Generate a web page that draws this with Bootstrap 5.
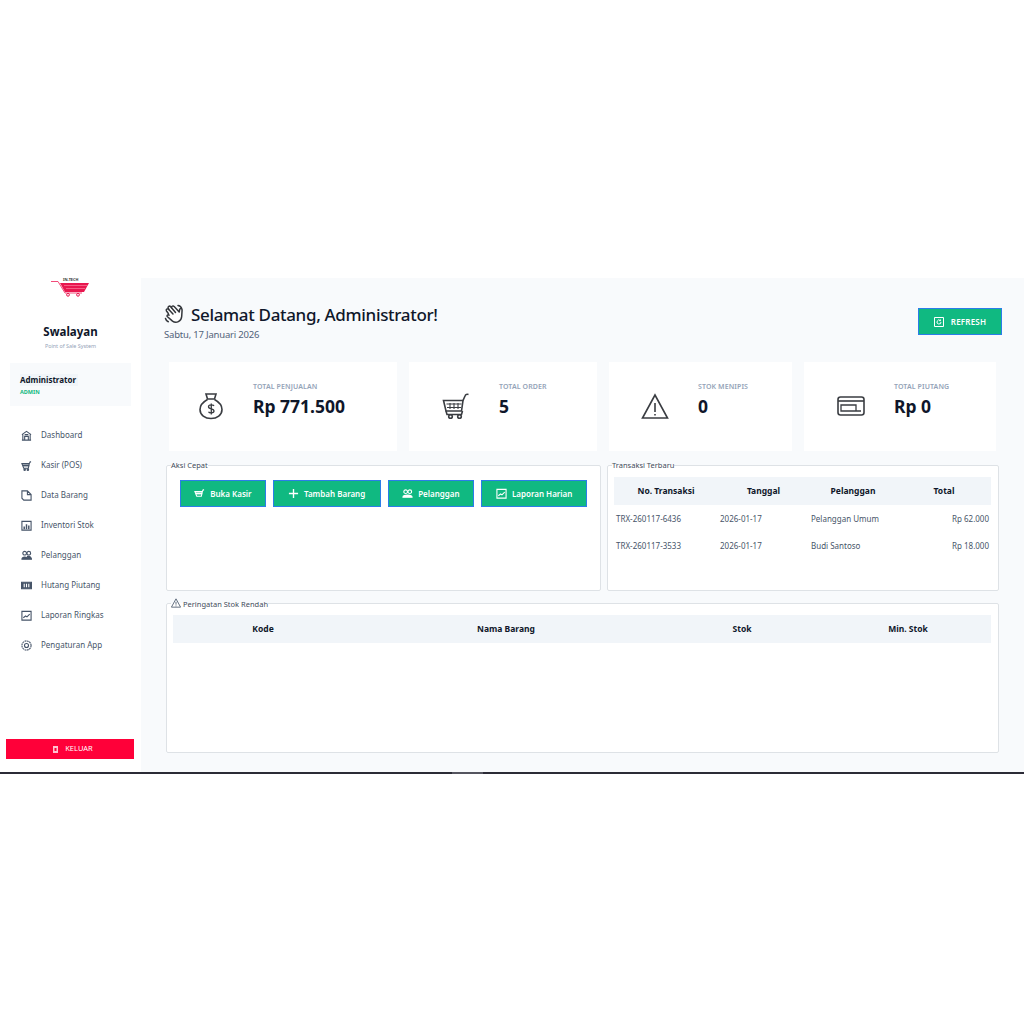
<!DOCTYPE html>
<html lang="en">
<head>
    <meta charset="UTF-8">
    <meta name="viewport" content="width=device-width, initial-scale=1.0">
    <title>Swalayan - Dashboard</title>
    <link href="https://cdn.jsdelivr.net/npm/bootstrap@5.3.0/dist/css/bootstrap.min.css" rel="stylesheet">
    <style>
        body { background: #fff; font-family: "Noto Sans", "Open Sans", sans-serif; color: #0f172a; }
        .app-frame { margin-top: 278px; height: 496px; overflow: hidden; }
        .frame-line { height: 2px; background: #2b2b36; padding-left: 452px; }
        .frame-thumb { display: block; width: 31px; height: 2px; background: #55555f; }
        .side-col { width: 141px; flex: none; background: #fff; height: 494px; }
        .logo-box { height: 43px; }
        .brand-name { font-size: 11.500px; font-weight: 700; line-height: 16px; margin-top: 3px; color: #0f172a; }
        .brand-sub { font-size: 5.400px; line-height: 8px; color: #94a3b8; margin-top: 2px; }
        .user-box { margin: 13px 10px 0; height: 43px; width: 121px; background: #f8fafc; padding: 11px 10px 0; }
        .user-name { font-size: 8px; line-height: 12px; font-weight: 700; color: #0f172a; background: #f1f5f9; width: fit-content; padding-right: 2px; }
        .user-role { font-size: 5.500px; line-height: 8px; font-weight: 700; color: #10b981; margin-top: 2px; }
        .side-menu { margin-top: 14px; padding-left: 21px; }
        .side-link { height: 30px; font-size: 8px; color: #475569; text-decoration: none; gap: 9px; }
        .side-link:hover { color: #475569; }
        .side-link svg { width: 11px; height: 11px; flex: none; stroke: #465468; fill: none; stroke-width: 1.200; }
        .logout-btn { margin: auto 0 13px 6px; width: 128px; height: 20px; background: #ff0039; color: #fff; font-size: 7.500px; border: 0; border-radius: 0; gap: 7px; padding: 0 0 0 6px; }
        .main-col { flex: 1; background: #f8fafc; padding: 25px 22px 0 23px; height: 494px; min-width: 0; }
        .page-title { font-size: 17px; line-height: 24px; font-weight: 500; letter-spacing: -.33px; color: #0f172a; gap: 5px; margin: 0; }
        .page-date { font-size: 9.500px; line-height: 14px; letter-spacing: -.2px; color: #52627a; margin-top: 1px; }
        .green-btn { background: #10b981; color: #fff; border: 1.500px solid #2b7de9; border-radius: 0; font-weight: 600; letter-spacing: .2px; }
        .green-btn:hover { background: #10b981; color: #fff; border-color: #2b7de9; }
        .refresh-btn { width: 84px; height: 27px; font-size: 8px; gap: 7px; margin-top: 5px; }
        .stat-grid { display: grid; grid-template-columns: 228px 188px 183px 192px; gap: 12px; margin: 20px 0 0 5px; }
        .stat-box { background: #fff; height: 89px; display: flex; }
        .stat-ico { flex: none; padding-top: 30px; display: flex; justify-content: center; }
        .stat-ico.nudge { padding-left: 3px; }
        .stat-ico svg { width: 28px; height: 28px; stroke: #3a3d42; fill: none; stroke-width: 1.600; }
        .stat-label { font-size: 7px; line-height: 10px; font-weight: 600; color: #94a3b8; margin-top: 20px; letter-spacing: .1px; }
        .stat-value { font-size: 17.500px; line-height: 24px; font-weight: 700; color: #0f172a; margin-top: 2px; }
        .panel-row { display: flex; gap: 6px; margin: 9px 3px 0 2px; }
        .panel-box { border: 1px solid #dee2e6; border-radius: 2px; background: #fff; margin: 0; padding: 0 7px 0 6px; min-width: 0; }
        .panel-box legend { float: none; width: auto; font-size: 7.500px; line-height: 10px; color: #414b5a; margin: 0 0 0 -2px; padding: 0; }
        .quick-box { width: 435px; height: 131px; padding: 0 13px; }
        .quick-box legend { margin-left: -9px; margin-bottom: 10px; }
        .quick-row { gap: 7px; }
        .trans-box { width: 392px; height: 131px; }
        .quick-btn { height: 27px; font-size: 8px; font-weight: 600; gap: 5px; letter-spacing: 0; }
        .quick-btn svg { width: 11px; height: 11px; stroke: #fff; fill: none; stroke-width: 1.200; flex: none; }
        .data-tbl { width: 100%; font-size: 8px; margin: 0; table-layout: fixed; }
        .data-tbl th { background: #f1f5f9; height: 28px; text-align: center; font-size: 8.500px; font-weight: 700; color: #0f172a; padding: 0; vertical-align: middle; }
        .data-tbl td { height: 27px; padding: 0 2px; color: #475569; vertical-align: middle; }
        .trans-tbl { margin-top: 7px; }
        .col-no { width: 104px; }
        .col-tgl { width: 91px; }
        .col-plg { width: 88px; }
        .col-kode { width: 180px; }
        .col-nama { width: 306px; }
        .col-stok { width: 166px; }
        .stock-box { height: 155px; margin: 7px 3px 0 2px; }
        .stock-tbl { margin-top: 6px; }
        .legend-ico { width: 10px; height: 10px; stroke: #475569; fill: none; stroke-width: 1; vertical-align: -1px; margin-right: 2px; }
    </style>
</head>
<body>
    <div class="app-frame">
        <div class="d-flex">
            <!-- Sidebar -->
            <aside class="side-col d-flex flex-column">
                <div class="logo-box d-flex justify-content-center">
                    <svg width="40" height="20" viewBox="0 0 40 20">
                        <text x="12" y="3" font-size="3.800" font-weight="700" fill="#333" font-family="Noto Sans, sans-serif">IN-TECH</text>
                        <path d="M0 3.500h7l7 11.500h17" fill="none" stroke="#f0386b" stroke-width=".9"/>
                        <path d="M9 5h29l-5 9H14z" fill="#e8174f"/>
                        <path d="M13 7.500h23M15 10.500h19" stroke="#ff8fa8" stroke-width=".6"/>
                        <circle cx="17" cy="16.800" r="1.400" fill="none" stroke="#e8174f"/>
                        <circle cx="27" cy="16.800" r="1.400" fill="none" stroke="#e8174f"/>
                    </svg>
                </div>
                <div class="text-center">
                    <div class="brand-name">Swalayan</div>
                    <div class="brand-sub">Point of Sale System</div>
                </div>
                <div class="user-box">
                    <div class="user-name">Administrator</div>
                    <div class="user-role">ADMIN</div>
                </div>
                <nav class="side-menu">
                    <a href="#" class="side-link d-flex align-items-center"><svg viewBox="0 0 12 12"><path d="M1 5 6 1.500 11 5M2 5v6h8V5M1 11h10M4 11V7h4v4M4 5h4"/></svg>Dashboard</a>
                    <a href="#" class="side-link d-flex align-items-center"><svg viewBox="0 0 12 12"><path d="M1 4h8l-1 5H3zM9 4l1-2h1"/><path d="M2 6h7" stroke-width="2"/><circle cx="4" cy="10.500" r=".8"/><circle cx="7.500" cy="10.500" r=".8"/></svg>Kasir (POS)</a>
                    <a href="#" class="side-link d-flex align-items-center"><svg viewBox="0 0 12 12"><path d="M1 1h6l4 4v6H3L1 9zM7 1v4h4"/></svg>Data Barang</a>
                    <a href="#" class="side-link d-flex align-items-center"><svg viewBox="0 0 12 12"><path d="M1 1.500h10v9.500H1z"/><path d="M3.500 10V7M6 10V4.500M8.500 10V6" stroke-width="1.600"/></svg>Inventori Stok</a>
                    <a href="#" class="side-link d-flex align-items-center"><svg viewBox="0 0 12 12"><circle cx="4" cy="3.500" r="2"/><circle cx="8.500" cy="3.500" r="2"/><path d="M1 10c0-3 6-3 6 0zM7 7c3-.5 4 1 4.500 3H7z" fill="#465468"/></svg>Pelanggan</a>
                    <a href="#" class="side-link d-flex align-items-center"><svg viewBox="0 0 12 12"><path d="M.5 2.500h11v7H.5z" fill="#465468"/><path d="M3.500 4v4M6 4v4M8.500 4v4" stroke="#fff"/></svg>Hutang Piutang</a>
                    <a href="#" class="side-link d-flex align-items-center"><svg viewBox="0 0 12 12"><path d="M1 1.500h10v9.500H1zM2.500 8.500 5 6.500l1.500 1L9.500 4.500"/></svg>Laporan Ringkas</a>
                    <a href="#" class="side-link d-flex align-items-center"><svg viewBox="0 0 12 12"><circle cx="6" cy="6" r="5" stroke-dasharray="2 .6"/><circle cx="6" cy="6" r="2.200"/></svg>Pengaturan App</a>
                </nav>
                <button class="logout-btn d-flex align-items-center justify-content-center">
                    <svg width="5" height="7" viewBox="0 0 5 7"><path d="M0 0h5v7H0z" fill="#ffc2d0"/><path d="M1.500 2h2v3h-2z" fill="#ff0039"/></svg>KELUAR
                </button>
            </aside>

            <!-- Main content -->
            <main class="main-col">
                <div class="d-flex justify-content-between align-items-start">
                    <div>
                        <h1 class="page-title d-flex align-items-center">
                            <svg width="22" height="22" viewBox="0 0 22 22" fill="#fff" stroke="#33363b" stroke-width="1.500" stroke-linejoin="round" stroke-linecap="round"><path d="M4 9 2.500 7c-1-1.500 1-3 2.300-1.600L4.200 4.200c-.8-1.600 1.400-2.800 2.500-1.400l.8 1c-.4-1.600 1.700-2.500 2.700-1.200l5 5.400.5-2.600c.3-1.400 2.400-1.200 2.400.4l-.4 6.700c-.3 4.700-5.500 7.400-9.200 4.600l-5-4.300c-1.200-1.100.3-2.600 1.500-1.600L4 9z"/><path d="M4.800 5.400 9 10M7.500 3.800 11.500 8.500" fill="none"/><path d="M14 1.500c1.600.1 3 1.200 3.600 2.800M1.500 14.500c.4 1.500 1.400 2.700 2.800 3.300" fill="none"/></svg>
                            Selamat Datang, Administrator!
                        </h1>
                        <div class="page-date">Sabtu, 17 Januari 2026</div>
                    </div>
                    <button class="btn green-btn refresh-btn d-flex align-items-center justify-content-center p-0">
                        <svg width="10" height="10" viewBox="0 0 10 10" fill="none" stroke="#fff" stroke-width="1"><path d="M.5.500h9v9h-9z"/><path d="M7 5a2 2 0 1 1-.7-1.500M6.500 2.500v1.200H5.300"/></svg>REFRESH
                    </button>
                </div>

                <div class="stat-grid">
                    <div class="stat-box">
                        <div class="stat-ico" style="width:84px">
                            <svg viewBox="0 0 28 28"><path d="M9 2h10l-1.500 5h-7zM10 7h8"/><path d="M10.500 7.500C6 10 3 13.500 3 17.500 3 23 8 26.500 14 26.500S25 23 25 17.500c0-4-3-7.500-7.500-10"/><path d="M17 14c-.8-1.500-5.500-1.700-5.500.8 0 2.900 5.500 1.400 5.500 4.300 0 2.400-4.700 2.300-5.500.7M14.300 11.500v11" stroke-width="1.300"/></svg>
                        </div>
                        <div>
                            <div class="stat-label">TOTAL PENJUALAN</div>
                            <div class="stat-value">Rp 771.500</div>
                        </div>
                    </div>
                    <div class="stat-box">
                        <div class="stat-ico nudge" style="width:90px">
                            <svg viewBox="0 0 28 28"><path d="M1.500 8.500h19.500l-1.500 10.500H4z"/><path d="M21 8.500 23 4c.5-1.500 2-2 3.500-1.500"/><path d="M4.500 12h15M5 15.500h14M8 11v6M12 11v6M16 11v6" stroke-width="1.100"/><path d="M4 19l1 3.500h14.500l1-3.500"/><circle cx="8.500" cy="24.500" r="1.800"/><circle cx="17.500" cy="24.500" r="1.800"/></svg>
                        </div>
                        <div>
                            <div class="stat-label">TOTAL ORDER</div>
                            <div class="stat-value">5</div>
                        </div>
                    </div>
                    <div class="stat-box">
                        <div class="stat-ico nudge" style="width:89px">
                            <svg viewBox="0 0 28 28"><path d="M14 3 1.500 26h25zM14 11v9M14 22v1.500"/></svg>
                        </div>
                        <div>
                            <div class="stat-label">STOK MENIPIS</div>
                            <div class="stat-value">0</div>
                        </div>
                    </div>
                    <div class="stat-box">
                        <div class="stat-ico nudge" style="width:90px">
                            <svg viewBox="0 0 28 28"><rect x="1" y="5" width="26" height="18" rx="2.500"/><path d="M1 9h26"/><path d="M4 13h15v6H4zM19 19h5" stroke-width="1.300"/></svg>
                        </div>
                        <div>
                            <div class="stat-label">TOTAL PIUTANG</div>
                            <div class="stat-value">Rp 0</div>
                        </div>
                    </div>
                </div>

                <div class="panel-row">
                    <fieldset class="panel-box quick-box">
                        <legend>Aksi Cepat</legend>
                        <div class="d-flex quick-row">
                            <button class="btn green-btn quick-btn d-flex align-items-center justify-content-center p-0" style="width:86px">
                                <svg viewBox="0 0 12 12"><path d="M1 4h8l-1 5H3zM9 4l1-2h1"/><path d="M2 6h7" stroke-width="2"/></svg>Buka Kasir</button>
                            <button class="btn green-btn quick-btn d-flex align-items-center justify-content-center p-0" style="width:108px">
                                <svg viewBox="0 0 12 12"><path d="M6 1v10M1 6h10" stroke-width="1.500"/></svg>Tambah Barang</button>
                            <button class="btn green-btn quick-btn d-flex align-items-center justify-content-center p-0" style="width:87px">
                                <svg viewBox="0 0 12 12"><circle cx="4" cy="4" r="2"/><circle cx="8.500" cy="4" r="2"/><path d="M1 10c0-3 10-3 10 0z" fill="#fff"/></svg>Pelanggan</button>
                            <button class="btn green-btn quick-btn d-flex align-items-center justify-content-center p-0" style="width:106px">
                                <svg viewBox="0 0 12 12"><path d="M1 1.500h10v9.500H1zM2.500 8.500 5 6.500l1.500 1L9.500 4.500"/></svg>Laporan Harian</button>
                        </div>
                    </fieldset>
                    <fieldset class="panel-box trans-box">
                        <legend>Transaksi Terbaru</legend>
                        <table class="data-tbl trans-tbl">
                            <colgroup><col class="col-no"><col class="col-tgl"><col class="col-plg"><col></colgroup>
                            <thead><tr><th>No. Transaksi</th><th>Tanggal</th><th>Pelanggan</th><th>Total</th></tr></thead>
                            <tbody>
                                <tr><td>TRX-260117-6436</td><td>2026-01-17</td><td>Pelanggan Umum</td><td class="text-end">Rp 62.000</td></tr>
                                <tr><td>TRX-260117-3533</td><td>2026-01-17</td><td>Budi Santoso</td><td class="text-end">Rp 18.000</td></tr>
                            </tbody>
                        </table>
                    </fieldset>
                </div>

                <fieldset class="panel-box stock-box">
                    <legend><svg class="legend-ico" viewBox="0 0 12 12"><path d="M6 1 .5 11h11zM6 4.500v3.500M6 9v1"/></svg>Peringatan Stok Rendah</legend>
                    <table class="data-tbl stock-tbl">
                        <colgroup><col class="col-kode"><col class="col-nama"><col class="col-stok"><col></colgroup>
                        <thead><tr><th>Kode</th><th>Nama Barang</th><th>Stok</th><th>Min. Stok</th></tr></thead>
                        <tbody></tbody>
                    </table>
                </fieldset>
            </main>
        </div>
        <div class="frame-line"><span class="frame-thumb"></span></div>
    </div>

    <script src="https://cdn.jsdelivr.net/npm/bootstrap@5.3.0/dist/js/bootstrap.bundle.min.js"></script>
</body>
</html>
